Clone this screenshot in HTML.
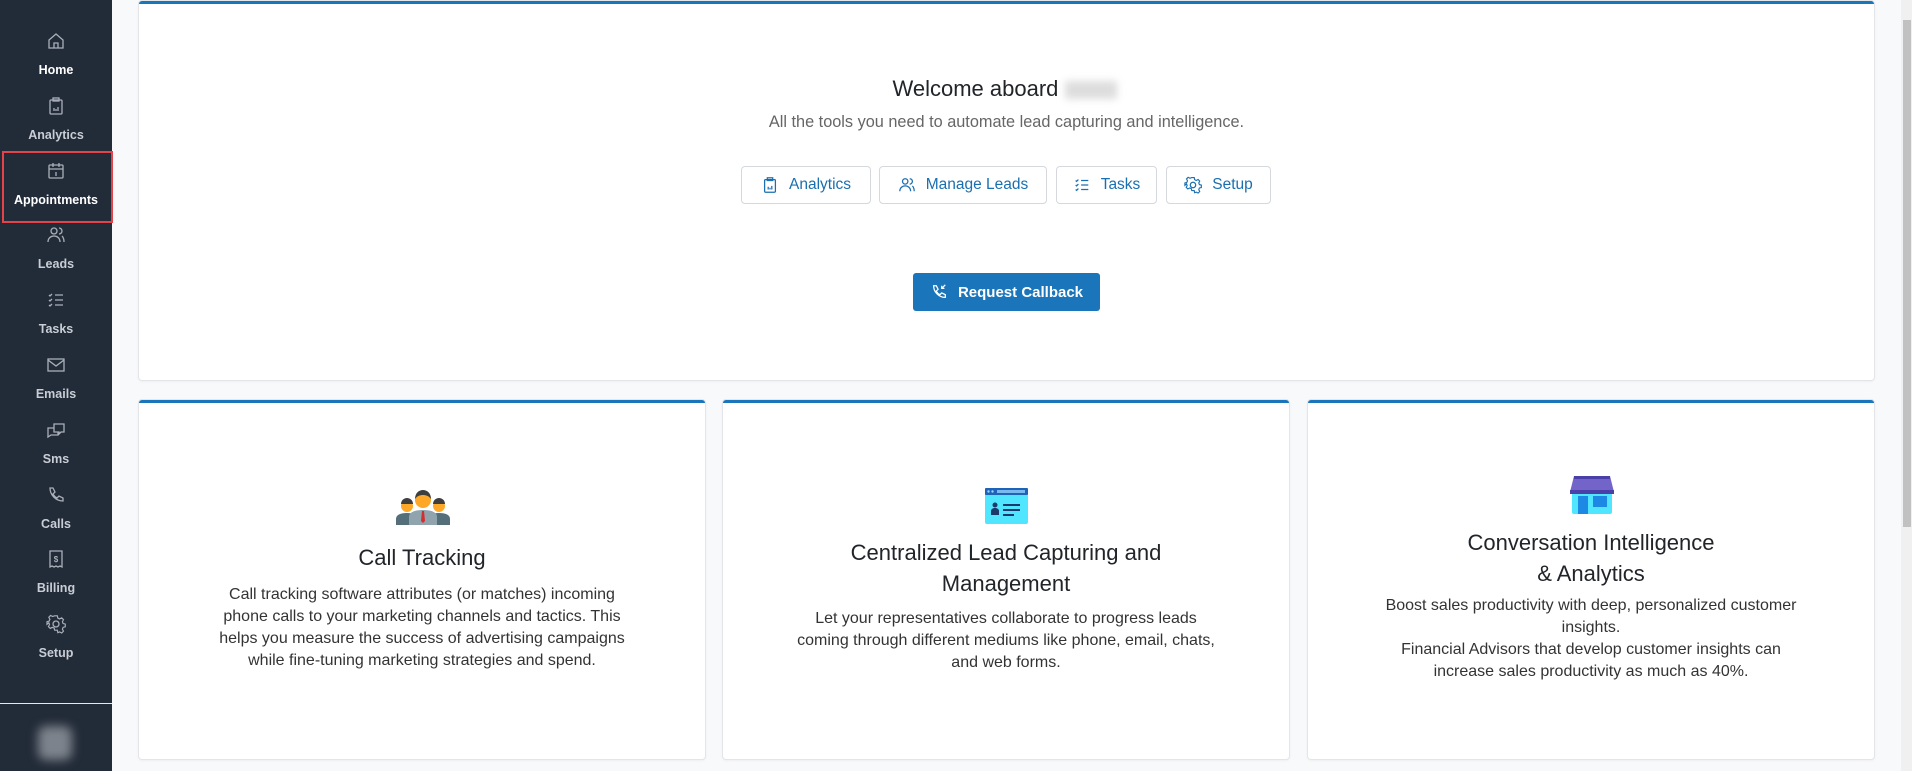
<!DOCTYPE html>
<html><head><meta charset="utf-8"><style>
*{box-sizing:border-box;margin:0;padding:0}
body{width:1912px;height:771px;overflow:hidden;background:#f8f9fa;font-family:"Liberation Sans",sans-serif;position:relative;color:#212529}
.sb{position:absolute;left:0;top:0;width:112px;height:771px;background:#222b38}
.it{position:absolute;left:0;width:112px;text-align:center;color:#c9ced6;font-size:12.5px;font-weight:bold}
.it svg{display:block;margin:0 auto 12px;width:20px;height:20px;stroke:#aab0ba;fill:none;stroke-width:1.3}
.it.w{color:#fff}
.red{position:absolute;left:2px;top:151px;width:111px;height:72px;border:2px solid #e5434a}
.line{position:absolute;left:0;top:703px;width:112px;height:1px;background:#e8e8e8}
.av{position:absolute;left:38px;top:726px;width:34px;height:34px;border-radius:8px;background:#7d838c;filter:blur(5px)}
.card{position:absolute;background:#fff;border-top:3px solid #1a75bb;border-radius:3px;box-shadow:0 0 0 1px #e3e5e8,0 1px 3px rgba(0,0,0,.08)}
.c{text-align:center;position:absolute;left:0;width:100%}
.btn{position:absolute;top:166px;height:38px;border:1px solid #d5d8dc;border-radius:4px;color:#1a6fb0;font-size:15.5px;display:flex;align-items:center;justify-content:center;gap:10px;background:#fff}
.btn svg{width:18px;height:18px;stroke:#1a6fb0;fill:none;stroke-width:1.4}
h3{font-weight:normal;font-size:22px;color:#212529;line-height:31px}
p.b{font-size:16px;line-height:22px;color:#333}
.scr{position:absolute;left:1901px;top:0;width:11px;height:771px;background:#f0f0f0}
.th{position:absolute;left:1903px;top:20px;width:8px;height:507px;background:#c1c1c1}
</style></head><body>
<div class="sb">
<div class="it w" style="top:31px"><svg viewBox="0 0 20 20"><path d="M3 9L10 3l7 6v8H3z M8 17v-5h4v5"/></svg>Home</div>
<div class="it" style="top:96px"><svg viewBox="0 0 20 20"><rect x="4" y="4" width="12" height="14" rx="1"/><rect x="7" y="2" width="6" height="3"/><path d="M8 15v-3M10 15v-2M12 15v-4"/></svg>Analytics</div>
<div class="it w" style="top:161px"><svg viewBox="0 0 20 20"><rect x="3" y="4" width="14" height="13" rx="1"/><path d="M3 8h14M7 2v4M13 2v4M10 11v4"/></svg>Appointments</div>
<div class="it" style="top:225px"><svg viewBox="0 0 20 20"><circle cx="8" cy="6" r="3"/><path d="M2 17c0-4 3-6 6-6s6 2 6 6M13 3a3 3 0 010 6M16 11c1 1 2 3 2 6"/></svg>Leads</div>
<div class="it" style="top:290px"><svg viewBox="0 0 20 20"><path d="M3 5l1 1 2-2M3 10l1 1 2-2M3 15l1 1 2-2M9 5h8M9 10h8M9 15h8"/></svg>Tasks</div>
<div class="it" style="top:355px"><svg viewBox="0 0 20 20"><rect x="2" y="4" width="16" height="12"/><path d="M2 5l8 6 8-6"/></svg>Emails</div>
<div class="it" style="top:420px"><svg viewBox="0 0 20 20"><path d="M8 4h10v8h-3l-2 2v-2H8z M12 12v3H5l-3 2V8h6"/></svg>Sms</div>
<div class="it" style="top:485px"><svg viewBox="0 0 20 20"><path d="M4 3l3 0 2 4-2 2c1 2 2 3 4 4l2-2 4 2v3c-7 0-13-6-13-13z"/></svg>Calls</div>
<div class="it" style="top:549px"><svg viewBox="0 0 20 20"><path d="M4 2h12v16l-2-1-2 1-2-1-2 1-2-1-2 1z"/><text x="10" y="13" font-size="8" text-anchor="middle" fill="#aab0ba" stroke="none" font-family="Liberation Sans">$</text></svg>Billing</div>
<div class="it" style="top:614px"><svg viewBox="0 0 20 20"><circle cx="10" cy="10" r="3"/><path d="M8.5 2h3l.5 2.5 2 1 2.3-1.2 2 2-1.2 2.3.8 2 2.4.6v3l-2.4.6-.8 2 1.2 2.3-2 2-2.3-1.2-2 .8L11.5 18h-3l-.6-2.4-2-.8-2.3 1.2-2-2 1.2-2.3-.8-2L0 11.5v-3l2.4-.6.8-2-1.2-2.3 2-2 2.3 1.2 2-.8z" transform="translate(1 0) scale(.9)"/></svg>Setup</div>
<div class="red"></div>
<div class="line"></div>
<div class="av"></div>
</div>

<div class="card" style="left:139px;top:1px;width:1735px;height:379px">
<div class="c" style="top:72px;font-size:22px;color:#212529;margin-left:-2px">Welcome aboard <span style="display:inline-block;width:52px;height:18px;background:#ddd;filter:blur(4px);vertical-align:middle"></span></div>
<div class="c" style="top:109px;font-size:16.3px;color:#666">All the tools you need to automate lead capturing and intelligence.</div>
</div>
<div class="btn" style="left:741px;width:130px"><svg viewBox="0 0 20 20"><rect x="4" y="4" width="12" height="14" rx="1"/><rect x="7" y="2" width="6" height="3"/><path d="M8 15v-3M10 15v-2M12 15v-4"/></svg>Analytics</div>
<div class="btn" style="left:879px;width:168px"><svg viewBox="0 0 20 20"><circle cx="8" cy="6" r="3"/><path d="M2 17c0-4 3-6 6-6s6 2 6 6M13 3a3 3 0 010 6M16 11c1 1 2 3 2 6"/></svg>Manage Leads</div>
<div class="btn" style="left:1056px;width:101px"><svg viewBox="0 0 20 20"><path d="M3 5l1 1 2-2M3 10l1 1 2-2M3 15l1 1 2-2M9 5h8M9 10h8M9 15h8"/></svg>Tasks</div>
<div class="btn" style="left:1166px;width:105px"><svg viewBox="0 0 20 20"><circle cx="10" cy="10" r="3"/><path d="M8.5 2h3l.5 2.5 2 1 2.3-1.2 2 2-1.2 2.3.8 2 2.4.6v3l-2.4.6-.8 2 1.2 2.3-2 2-2.3-1.2-2 .8L11.5 18h-3l-.6-2.4-2-.8-2.3 1.2-2-2 1.2-2.3-.8-2L0 11.5v-3l2.4-.6.8-2-1.2-2.3 2-2 2.3 1.2 2-.8z" transform="translate(1 0) scale(.9)"/></svg>Setup</div>
<div style="position:absolute;left:913px;top:273px;width:187px;height:38px;background:#1a75bb;border-radius:3px;color:#fff;font-weight:bold;font-size:15px;display:flex;align-items:center;justify-content:center;gap:10px"><svg viewBox="0 0 20 20" width="18" height="18" fill="none" stroke="#fff" stroke-width="1.4"><path d="M4 3l3 0 2 4-2 2c1 2 2 3 4 4l2-2 4 2v3c-7 0-13-6-13-13z M17 2l-4 4M13 3v3h3"/></svg>Request Callback</div>

<div class="card" style="left:139px;top:400px;width:566px;height:359px">
<svg style="position:absolute;left:257px;top:86px" width="54" height="36" viewBox="0 0 54 36">
<circle cx="11" cy="17" r="6" fill="#ffa726"/><path d="M5 15a6 6 0 0112 0z" fill="#3e3e3e"/><path d="M0 36v-6c0-4 4-6 11-6s11 2 11 6v6z" fill="#546e7a"/>
<circle cx="43" cy="17" r="6" fill="#ffa726"/><path d="M37 15a6 6 0 0112 0z" fill="#3e3e3e"/><path d="M32 36v-6c0-4 4-6 11-6s11 2 11 6v6z" fill="#546e7a"/>
<path d="M13 36v-8c0-5 6-7 14-7s14 2 14 7v8z" fill="#90a4ae"/><circle cx="27" cy="11" r="8" fill="#ffa726"/><path d="M19 10c0-6 4-9 8-9s8 3 8 9c-2-3-5-4-8-4s-6 1-8 4z" fill="#3e3e3e"/><path d="M26 22h2l1 10-2 2-2-2z" fill="#d32f2f"/>
</svg>
<div class="c" style="top:139px"><h3>Call Tracking</h3></div>
<div class="c" style="top:181px"><p class="b">Call tracking software attributes (or matches) incoming<br>phone calls to your marketing channels and tactics. This<br>helps you measure the success of advertising campaigns<br>while fine-tuning marketing strategies and spend.</p></div>
</div>

<div class="card" style="left:723px;top:400px;width:566px;height:359px">
<svg style="position:absolute;left:262px;top:85px" width="43" height="36" viewBox="0 0 43 36"><rect x="0" y="0" width="43" height="36" rx="2" fill="#50e6ff"/><rect x="0" y="0" width="43" height="7" rx="1" fill="#1e63b7"/><rect x="12" y="2" width="28" height="3" fill="#7ab8f0"/><circle cx="3.5" cy="3.5" r="1.2" fill="#9fd3ff"/><circle cx="7.5" cy="3.5" r="1.2" fill="#9fd3ff"/><circle cx="10" cy="17" r="2.5" fill="#1b3a6b"/><path d="M6 27v-4c0-2 2-3 4-3s4 1 4 3v4z" fill="#1b3a6b"/><path d="M18 17h17M18 22h17M18 27h11" stroke="#1b3a6b" stroke-width="2"/></svg>
<div class="c" style="top:134px"><h3>Centralized Lead Capturing and<br>Management</h3></div>
<div class="c" style="top:205px"><p class="b">Let your representatives collaborate to progress leads<br>coming through different mediums like phone, email, chats,<br>and web forms.</p></div>
</div>

<div class="card" style="left:1308px;top:400px;width:566px;height:359px">
<svg style="position:absolute;left:262px;top:71px" width="44" height="40" viewBox="0 0 44 40"><rect x="2" y="18" width="40" height="22" rx="2" fill="#50e6ff"/><path d="M4 2h36l4 16H0z" fill="#7364c9"/><path d="M0 16h44v4H0z" fill="#4b3fa8"/><path d="M4 2h36v3H4z" fill="#4b3fa8"/><rect x="8" y="22" width="10" height="18" fill="#1e88e5"/><rect x="23" y="22" width="14" height="11" fill="#1e88e5"/></svg>
<div class="c" style="top:124px"><h3>Conversation Intelligence<br>&amp; Analytics</h3></div>
<div class="c" style="top:192px"><p class="b">Boost sales productivity with deep, personalized customer<br>insights.<br>Financial Advisors that develop customer insights can<br>increase sales productivity as much as 40%.</p></div>
</div>

<div class="scr"></div><div class="th"></div>
</body></html>
